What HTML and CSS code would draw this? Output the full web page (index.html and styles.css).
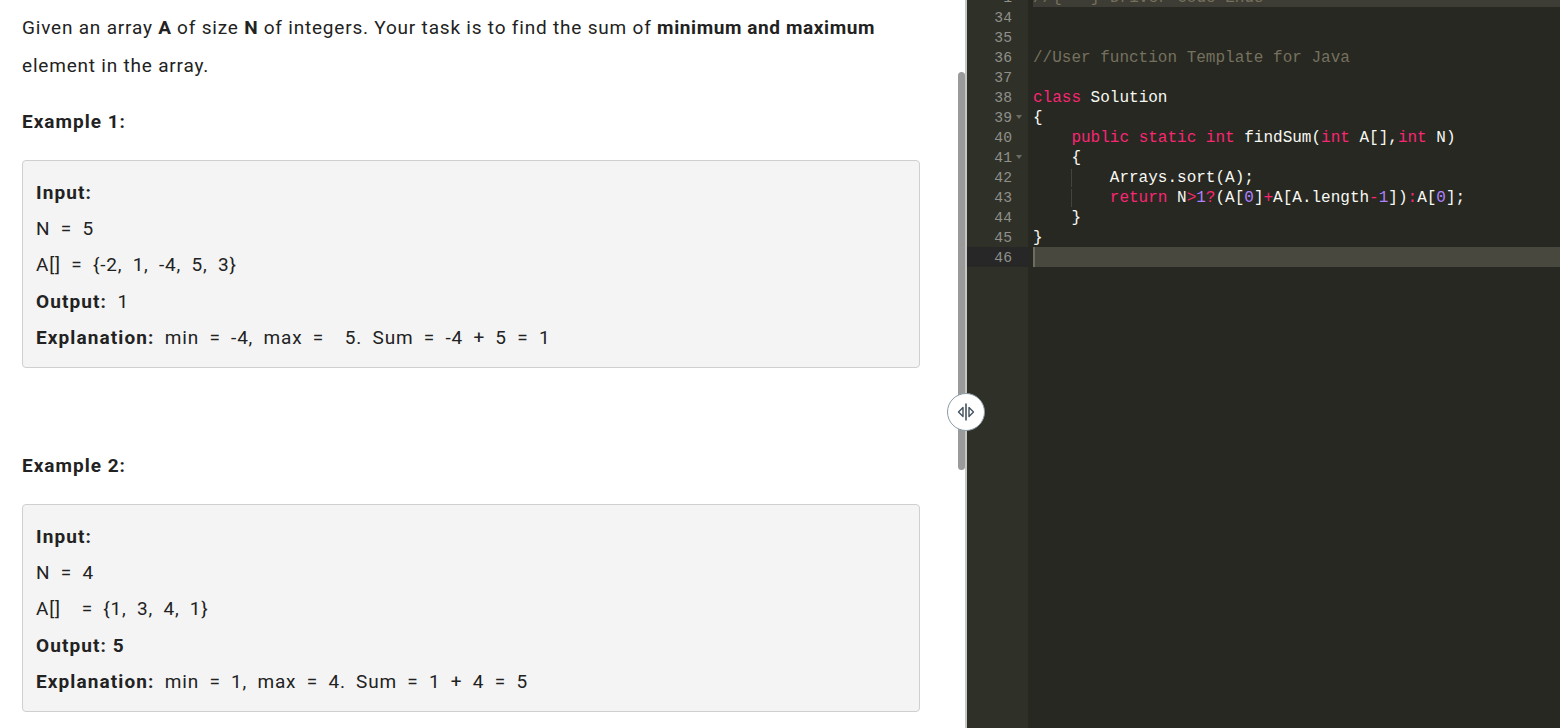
FILE: index.html
```html
<!DOCTYPE html>
<html>
<head>
<meta charset="utf-8">
<link rel="stylesheet" href="styles.css">
</head>
<body>
<div class="app">
  <div class="left">
    <div class="problem">
      <p class="intro">Given an array <b>A</b> of size <b>N</b> of integers. Your task is to find the sum of <b>minimum and maximum</b> element in the array.</p>
      <h3 class="ex-title">Example 1:</h3>
      <div class="ex-box">
        <div class="ln"><b>Input:</b></div>
        <div class="ln">N = 5</div>
        <div class="ln">A[] = {-2, 1, -4, 5, 3}</div>
        <div class="ln"><b>Output:</b> 1</div>
        <div class="ln"><b>Explanation:</b> min = -4, max =  5. Sum = -4 + 5 = 1</div>
      </div>
      <div class="spacer"></div>
      <h3 class="ex-title">Example 2:</h3>
      <div class="ex-box">
        <div class="ln"><b>Input:</b></div>
        <div class="ln">N = 4</div>
        <div class="ln">A[]  = {1, 3, 4, 1}</div>
        <div class="ln"><b>Output: 5</b></div>
        <div class="ln"><b>Explanation:</b> min = 1, max = 4. Sum = 1 + 4 = 5</div>
      </div>
    </div>
    <div class="vscroll"><div class="thumb"></div></div>
  </div>
  <div class="divider"></div>
  <div class="editor">
    <div class="gutter">
      <div class="gl first">1</div>
      <div class="gl">34</div>
      <div class="gl">35</div>
      <div class="gl">36</div>
      <div class="gl">37</div>
      <div class="gl">38</div>
      <div class="gl fold">39</div>
      <div class="gl">40</div>
      <div class="gl fold">41</div>
      <div class="gl">42</div>
      <div class="gl">43</div>
      <div class="gl">44</div>
      <div class="gl">45</div>
      <div class="gl active">46</div>
    </div>
    <div class="code">
      <div class="cl first marked"><span class="c">//{</span><span class="fold-widget"></span><span class="c">} Driver Code Ends</span></div>
      <div class="cl"></div>
      <div class="cl"></div>
      <div class="cl"><span class="c">//User function Template for Java</span></div>
      <div class="cl"></div>
      <div class="cl"><span class="k">class</span> Solution</div>
      <div class="cl">{</div>
      <div class="cl">    <span class="k">public</span> <span class="k">static</span> <span class="k">int</span> findSum(<span class="k">int</span> A[],<span class="k">int</span> N)</div>
      <div class="cl">    {</div>
      <div class="cl">    <span class="guide">    </span>Arrays.sort(A);</div>
      <div class="cl">    <span class="guide">    </span><span class="k">return</span> N<span class="k">&gt;</span><span class="n">1</span><span class="k">?</span>(A[<span class="n">0</span>]<span class="k">+</span>A[A.length<span class="k">-</span><span class="n">1</span>])<span class="k">:</span>A[<span class="n">0</span>];</div>
      <div class="cl">    }</div>
      <div class="cl">}</div>
      <div class="cl active"><span class="cursor"></span></div>
    </div>
  </div>
  <div class="splitter">
    <svg width="22" height="22" viewBox="0 0 22 22">
      <path d="M8 6.5 L3.5 11 L8 15.5 Z" fill="none" stroke="#44525e" stroke-width="1.4" stroke-linejoin="round"/>
      <path d="M14 6.5 L18.5 11 L14 15.5 Z" fill="none" stroke="#44525e" stroke-width="1.4" stroke-linejoin="round"/>
      <line x1="11" y1="2.5" x2="11" y2="19.5" stroke="#44525e" stroke-width="1.6"/>
    </svg>
  </div>
</div>
</body>
</html>
```
FILE: styles.css
```css
* { box-sizing: border-box; }
html, body { margin: 0; padding: 0; }
body { width: 1560px; height: 728px; overflow: hidden; background: #fff; }
.app { display: flex; height: 728px; position: relative; }

.left { width: 965px; display: flex; flex: none; background: #fff; }
.problem {
  flex: 1;
  padding: 9px 38px 0 22px;
  font-family: Roboto, "Noto Sans", sans-serif;
  font-size: 19px;
  letter-spacing: 0.8px;
  color: #222;
  font-weight: 400;
}
.problem b { font-weight: 700; letter-spacing: 1.1px; }
.intro { margin: 0; line-height: 38px; }
.intro b { letter-spacing: 0.6px; }
.ex-title { margin: 18px 0 0; font-size: 19px; font-weight: 700; line-height: 38px; letter-spacing: 1px; }
.ex-box {
  margin-top: 19px;
  background: #f4f4f4;
  border: 1px solid #cfcfcf;
  border-radius: 4px;
  padding: 14px 13px 11px;
  word-spacing: 4.9px;
}
.ex-box b { word-spacing: 0; }
.ln { line-height: 36.2px; white-space: pre; }
.spacer { height: 61px; }

.vscroll { width: 7px; flex: none; padding-top: 72px; }
.thumb { width: 7px; height: 398px; background: #9a9a9a; border-radius: 4px; }

.divider { width: 2px; flex: none; background: #c6c6c6; }

.editor {
  flex: 1;
  display: flex;
  background: #272822;
  overflow: hidden;
  font-family: "Liberation Mono", "DejaVu Sans Mono", monospace;
}
.gutter { width: 61px; flex: none; background: #2f3129; color: #8f908a; font-size: 14.7px; }
.gl { height: 20px; line-height: 22px; text-align: right; padding-right: 16px; position: relative; }
.gl.first { margin-top: -13px; }
.gl.active { background: #272727; }
.gl.fold::after {
  content: "";
  position: absolute;
  right: 6px; top: 8px;
  border-left: 3px solid transparent;
  border-right: 3px solid transparent;
  border-top: 4px solid #6b6c66;
}
.code { flex: 1; color: #f8f8f2; font-size: 16px; padding-left: 5px; }
.cl { height: 20px; line-height: 23px; white-space: pre; }
.cl.first { margin-top: -13px; }
.cl.marked { background: #3e3d35; }
.cl.active { background: #49483e; }
.c { color: #75715e; }
.k { color: #f92672; }
.n { color: #ae81ff; }
.guide { box-shadow: inset 1px 0 0 #43443d; }
.fold-widget {
  display: inline-block;
  width: 27px; height: 11px;
  margin: 0 1px;
  vertical-align: 2px;
  background: #a6e22e;
  border: 1px solid #1d1e19;
  border-radius: 3px;
}
.cursor { display: inline-block; width: 2px; height: 20px; background: #6d6c62; vertical-align: top; }

.splitter {
  position: absolute;
  left: 947px; top: 393px;
  width: 38px; height: 38px;
  border-radius: 50%;
  background: #fff;
  border: 1px solid #8b9aa4;
  display: flex; align-items: center; justify-content: center;
}
```
